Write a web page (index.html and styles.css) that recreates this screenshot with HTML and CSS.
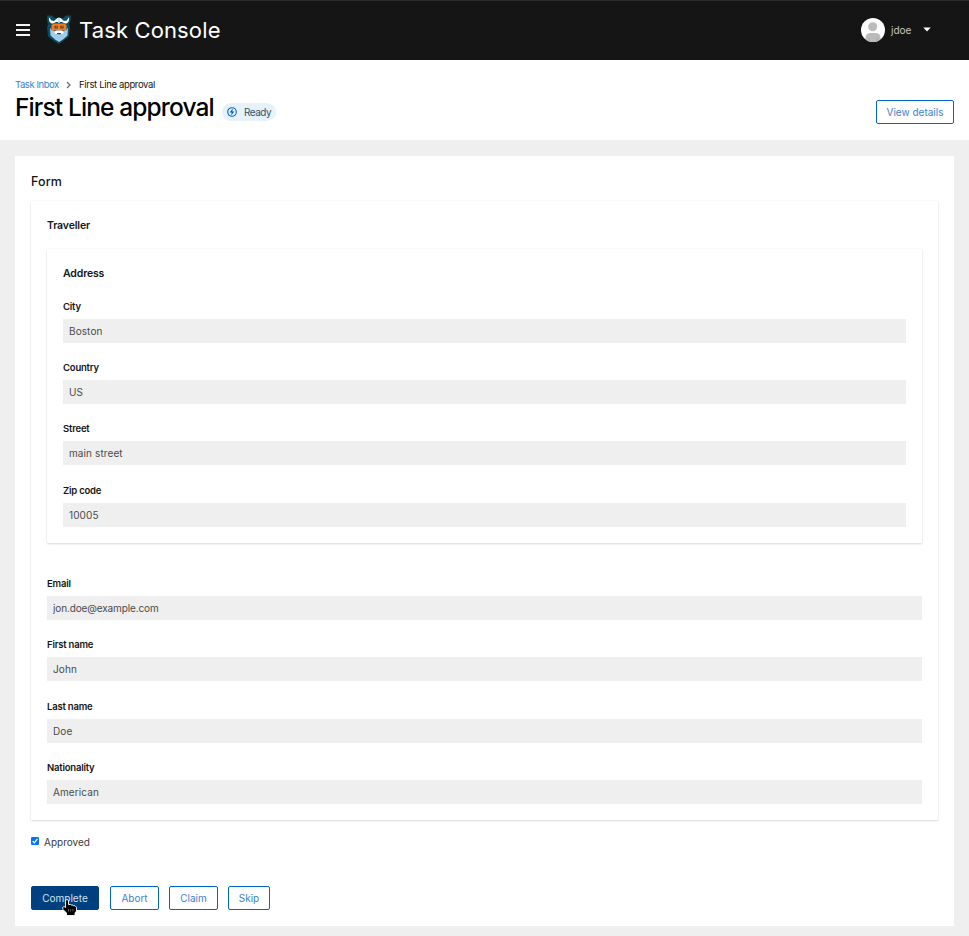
FILE: index.html
```html
<!DOCTYPE html>
<html lang="en">
<head>
<meta charset="utf-8">
<title>Task Console</title>
<link rel="stylesheet" href="styles.css">
</head>
<body>
<header class="masthead">
  <div class="burger"><i></i><i></i><i></i></div>
  <svg class="logo" viewBox="0 0 24 29" width="24" height="29">
    <path d="M0 .5h5l3 2.500h8l3-2.500h5l-.5 6-1.500 3 1 3-1 9-6.500 5L12 29l-4.500-2.500L1 21.500l-1-9 1-3L.2 6z" fill="#0a4c62"/>
    <path d="M2 2.200C1.500 6 3 8.500 6 8.500l3-1.500h6l3 1.500c3 0 4.500-2.300 4-6.300L19.500 5.500 17 6l-3.500-3h-3L7 6l-2.500-.5z" fill="#fff"/>
    <path d="M11.200 2.500h1.600V8h-1.600z" fill="#b9dcf2"/>
    <path d="M4.500 10L7 8.500h10l2.500 1.500v5.500h-15z" fill="#f47b20"/>
    <path d="M7.500 10.800h3.200v2.700H7.500zM13.300 10.800h3.200v2.700h-3.200z" fill="#5b3b2b"/>
    <path d="M8.700 11.600h1v1h-1zM14.500 11.600h1v1h-1z" fill="#f9a65a"/>
    <path d="M3 12.500l1.500 2.500 3 1h9l3-1 1.500-2.500-.5 8L16 24.500 12 27l-4-2.500-4.500-4z" fill="#9fcdeb"/>
    <path d="M7 18l2-2.500h6l2 2.500-2 1H9z" fill="#fff"/>
    <path d="M9.800 18h4.400l-.7 1.200h-3z" fill="#0a4c62"/>
  </svg>
  <div class="brand">Task Console</div>
  <div class="user">
    <svg width="24" height="24" viewBox="0 0 24 24"><defs><clipPath id="disc"><circle cx="12" cy="12" r="12"/></clipPath></defs><g clip-path="url(#disc)"><path d="M0 0h24v24H0z" fill="#fff"/><circle cx="11.700" cy="8.800" r="4.500" fill="#bbb"/><path d="M4.500 24v-4q0-5 5-5h5q5 0 5 5v4z" fill="#bbb"/><path d="M8 20v4M16 20v4" stroke="#a8a8a8"/></g></svg>
    <span class="username">jdoe</span>
    <svg class="caret" width="8" height="5" viewBox="0 0 8 5"><path d="M.3.500h7.400L4 4.500z" fill="#fff"/></svg>
  </div>
</header>
<section class="page-head">
  <nav class="crumbs"><a class="crumb-link">Task Inbox</a><svg width="5" height="8" viewBox="0 0 5 8"><path d="M1 1l3 3-3 3" fill="none" stroke="#6a6e73" stroke-width="1.300"/></svg><span class="crumb-current">First Line approval</span></nav>
  <div class="title-row">
    <h1>First Line approval</h1>
    <span class="badge"><svg width="10" height="10" viewBox="0 0 10 10"><circle cx="5" cy="5" r="4.300" fill="none" stroke="#06c" stroke-width="1.100"/><path d="M5.700 1.600L2.600 5.500h2L4.200 8.400l3.200-4h-2z" fill="#06c"/></svg><span>Ready</span></span>
    <button class="btn details"><span>View details</span></button>
  </div>
</section>
<main class="card">
  <h2>Form</h2>
  <section class="panel traveller">
    <h3>Traveller</h3>
    <section class="panel address">
      <h3>Address</h3>
      <div class="field"><label>City</label><div class="value">Boston</div></div>
      <div class="field"><label>Country</label><div class="value">US</div></div>
      <div class="field"><label>Street</label><div class="value">main street</div></div>
      <div class="field"><label>Zip code</label><div class="value">10005</div></div>
    </section>
    <div class="field"><label>Email</label><div class="value email">jon.doe@example.com</div></div>
    <div class="field"><label>First name</label><div class="value">John</div></div>
    <div class="field"><label>Last name</label><div class="value">Doe</div></div>
    <div class="field"><label>Nationality</label><div class="value">American</div></div>
  </section>
  <div class="approved"><svg width="8" height="8" viewBox="0 0 8 8"><rect width="8" height="8" rx="1.200" fill="#0075ff"/><path d="M1.600 4.200l1.700 1.600 3.100-4" fill="none" stroke="#fff" stroke-width="1.200"/></svg><span>Approved</span></div>
  <div class="actions">
    <button class="btn complete"><span>Complete</span>
      <svg class="pointer" width="15" height="17" viewBox="0 0 15 17"><path d="M3.500 2q0-1.500 1.500-1.500T6.500 2v3.500h2l.5.500h2l.5.700h1.500l1.500 1.500V12L13 14v2.500H4.500V14L1 10.500.5 8.500 2 7.500l1.500 1z" fill="#000" stroke="#fff" stroke-width=".9"/><path d="M6.500 10v2.500M8.700 10v2.500M10.900 10v2.500" stroke="#999" stroke-width=".6"/></svg>
    </button>
    <button class="btn abort"><span>Abort</span></button>
    <button class="btn claim"><span>Claim</span></button>
    <button class="btn skip"><span>Skip</span></button>
  </div>
</main>
</body>
</html>
```
FILE: styles.css
```css
* { box-sizing: border-box; }
body { margin: 0; height: 936px; background: #efefef; font: 10px/16px Inter, "Liberation Sans", sans-serif; color: #151515; overflow: hidden; }
h1, h2, h3 { margin: 0; font-weight: 400; }
svg { display: block; flex: none; }

.masthead { height: 60px; padding: 0 38px 2px 16px; background: #151515; border-top: 1px solid #292929; display: flex; align-items: center; }
.burger { width: 14px; display: grid; gap: 3px; }
.burger i { height: 2px; background: #f4f4f4; }
.logo { margin-left: 17px; }
.brand { margin-left: 8px; color: #fff; font-size: 22px; line-height: 30px; letter-spacing: .13px; white-space: nowrap; }
.user { width: 70px; margin-left: auto; display: flex; align-items: center; }
.username { width: 38px; margin-left: 6px; color: #c8c8c8; }
.caret { margin-left: -6px; }

.page-head { height: 80px; padding: 17px 15px 0; background: #fff; }
.crumbs { display: flex; align-items: center; height: 16px; white-space: nowrap; font-size: 9.5px; }
.crumb-link { width: 51px; color: #3b82d1; letter-spacing: -.45px; }
.crumb-current { margin-left: 8px; letter-spacing: -.35px; }
.title-row { display: flex; align-items: flex-start; }
h1 { width: 206px; margin-top: -1px; font-size: 24.5px; font-weight: 500; line-height: 30px; letter-spacing: -.87px; white-space: nowrap; color: #000; }
.badge { width: 54px; height: 18px; margin: 10px 0 0 1px; padding-left: 5px; display: flex; align-items: center; gap: 7px; border-radius: 9px; background: #e7f1fa; color: #34516b; letter-spacing: -.5px; }
.btn { position: relative; height: 24px; padding: 0; border: 1px solid #06c; border-radius: 2px; background: #fff; color: #3b82d1; font: 10px/20px Inter, "Liberation Sans", sans-serif; white-space: nowrap; }
.details { width: 78px; margin: 7px 0 0 auto; }

.card { height: 770px; margin: 16px 15px 0; padding: 16px; background: #fff; }
h2 { font-size: 12.5px; font-weight: 500; line-height: 20px; height: 29px; letter-spacing: .1px; }
h3 { font-size: 10.5px; font-weight: 600; line-height: 18px; height: 16px; letter-spacing: -.15px; }
.panel { padding: 16px; background: #fff; box-shadow: 0 1px 2px rgba(3, 3, 3, .14), 0 0 1px rgba(3, 3, 3, .1); }
.traveller { height: 619px; }
.address { height: 294px; margin: 16px 0 32px; }
.address h3 { margin-bottom: 16.8px; }
.field { height: 61.3px; }
.field label { display: block; height: 21px; line-height: 17px; font-size: 9.5px; font-weight: 600; letter-spacing: -.2px; }
.value { height: 24px; padding-left: 6px; background: #efefef; color: #4a4a4a; line-height: 24px; letter-spacing: .1px; }
.email { letter-spacing: -.13px; }
.approved { display: flex; margin-top: 14px; gap: 5px; color: #3c3c3c; }
.approved svg { margin-top: 3px; }
.actions { display: flex; margin-top: 36px; gap: 10px; }
.complete { width: 68px; margin-right: 1px; background: #004080; border-color: #004080; color: #d5e0eb; }
.abort, .claim { width: 49px; }
.skip { width: 42px; }
.pointer { position: absolute; left: 30px; top: 12px; }
```
